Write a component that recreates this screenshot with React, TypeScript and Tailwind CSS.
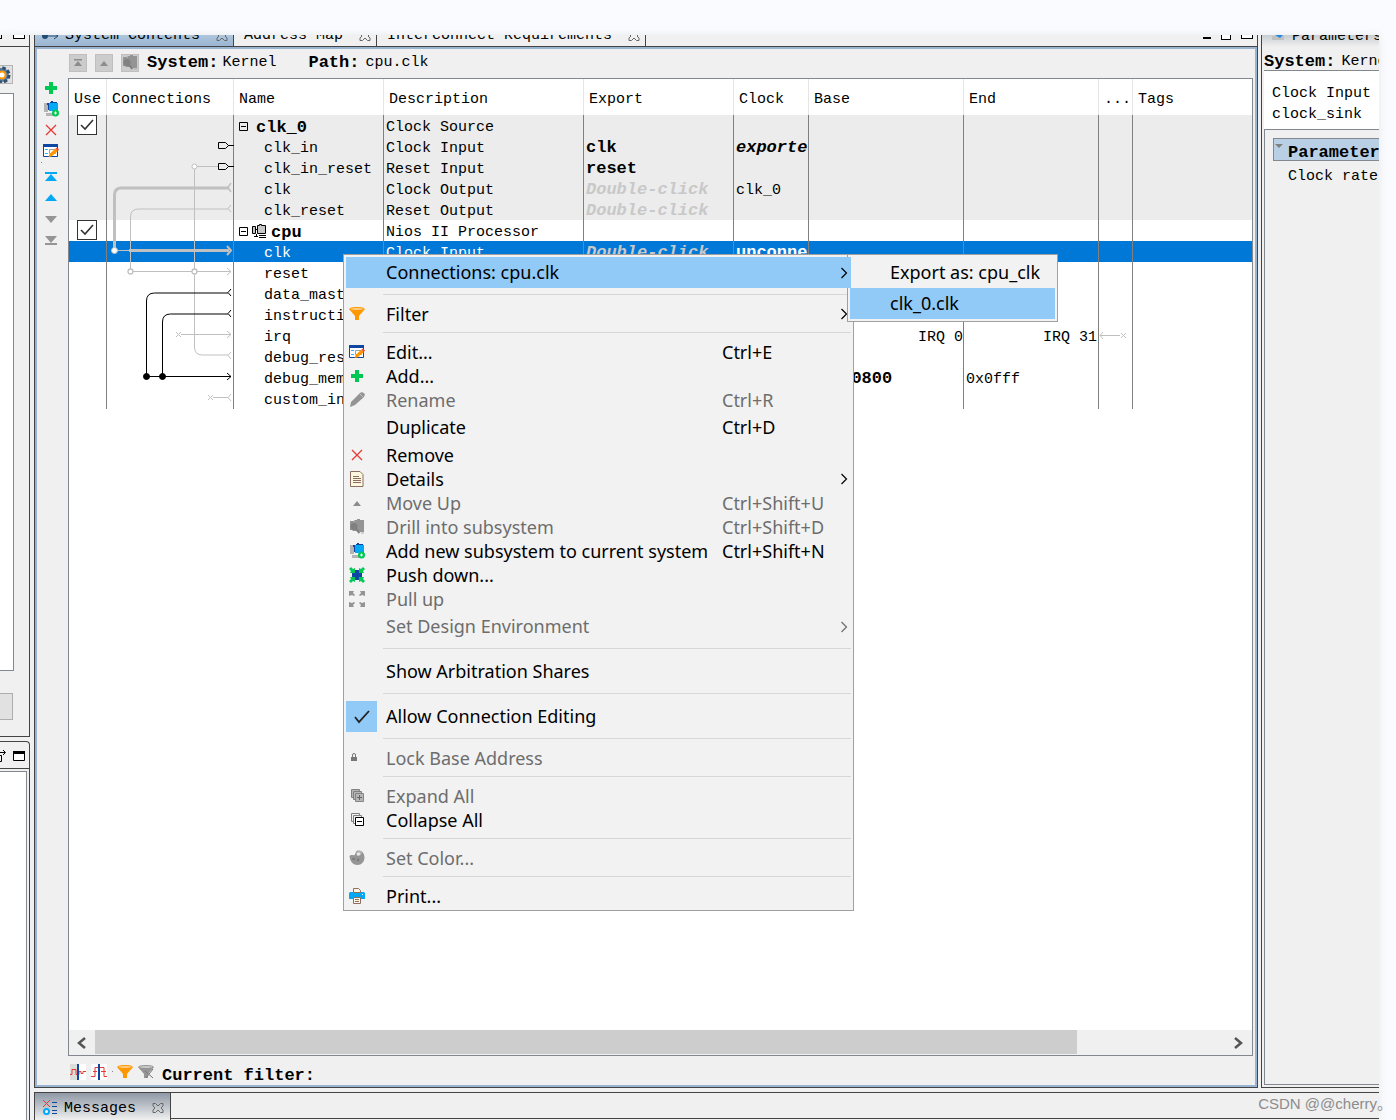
import type { ReactNode } from "react";
import clsx from "clsx";

/* ---------- icons ---------- */

function PlusIcon() {
  return (
    <svg width="16" height="16" viewBox="0 0 16 16">
      <path d="M6 2h4v4h4v4h-4v4H6v-4H2V6h4z" fill="#00c853" />
    </svg>
  );
}

function SubsystemIcon() {
  return (
    <svg width="16" height="16" viewBox="0 0 16 16">
      <path d="M1 2h4v9H1zM3 12h7v3H3z" fill="#b4b4b4" />
      <path d="M4 2h3V1h1V0h2v1h4v3H6v5H5V4H4z" fill="#0d47a1" />
      <path d="M6 2h9v8H6z" fill="#03a9f4" />
      <circle cx="12.500" cy="12" r="3.500" fill="#00c853" />
      <path d="M12.500 10.500v3M11 12h3" stroke="#fff" />
    </svg>
  );
}

function CrossIcon() {
  return (
    <svg width="16" height="16" viewBox="0 0 16 16">
      <path d="M3 3l10 10M13 3L3 13" stroke="#e53935" strokeWidth="1.3" />
    </svg>
  );
}

function EditIcon() {
  return (
    <svg width="16" height="16" viewBox="0 0 16 16">
      <path d="M.5 1.500h14v12H.5z" fill="#fff" stroke="#0d47a1" />
      <path d="M0 1h15v3H0z" fill="#0d47a1" />
      <path d="M2 6.500h3M2 10.500h3" stroke="#29b6f6" />
      <path d="M6.500 6.500h6v4h-6z" fill="#fff" stroke="#9e9e9e" />
      <path d="M5.500 14l1-3 6-5.500 2.500 2.500-6.500 5.500z" fill="#ff9800" />
      <path d="M12.500 5.500L14 4.500l2 2-1.300 1.500z" fill="#f44336" />
    </svg>
  );
}

function TriangleIcon({ down, bar, color }: { down?: boolean; bar?: boolean; color: string }) {
  return (
    <svg width="16" height="16" viewBox="0 0 16 16">
      <g transform={down ? "rotate(180 8 8)" : undefined} fill={color}>
        {bar && <path d="M2 3h12v2H2z" />}
        <path d={bar ? "M8 5l6 7H2z" : "M8 4l6 7H2z"} />
      </g>
    </svg>
  );
}

function SmallUpIcon({ bar }: { bar?: boolean }) {
  return (
    <svg width="16" height="16" viewBox="0 0 16 16">
      {bar && <path d="M4 4h8v1.500H4z" fill="#8c8c8c" />}
      <path d="M8 6l4 5H4z" fill="#8c8c8c" />
    </svg>
  );
}

function DrillIcon() {
  return (
    <svg width="16" height="16" viewBox="0 0 16 16">
      <path d="M1 2h4v1h1V1h2V0h3v1h4v12h-4l-1-1H4l-1-1H1z" fill="#949494" />
      <circle cx="5" cy="7.500" r="3.500" fill="#808080" />
      <path d="M7 10l3.500 4" stroke="#808080" strokeWidth="2" />
      <path d="M5.500 1v2M12 14h3" stroke="#b0b0b0" />
    </svg>
  );
}

function FunnelIcon({ off }: { off?: boolean }) {
  return (
    <svg width="16" height="16" viewBox="0 0 16 16">
      <path d="M0 3l6 7v4h4v-4l6-7z" fill={off ? "#959595" : "#ff9800"} />
      <ellipse cx="8" cy="3" rx="7.500" ry="1.500" fill={off ? "#c9c9c9" : "#ffcc80"} stroke={off ? "#959595" : "#ff9800"} />
      {off && <path d="M7 7l8 7M15 5l-7 9" stroke="#777" />}
    </svg>
  );
}

function PencilIcon() {
  return (
    <svg width="16" height="16" viewBox="0 0 16 16">
      <path d="M1 15l1-5 9-9 2-1 3 2-1 3-9 8z" fill="#949494" />
      <path d="M11 2l3 3" stroke="#c4c4c4" />
    </svg>
  );
}

function DocIcon() {
  return (
    <svg width="16" height="16" viewBox="0 0 16 16">
      <path d="M1.500.5h9.500l3 3v12H1.500z" fill="#fff8e1" stroke="#8d6e63" />
      <path d="M4 5.500h6M4 7.500h8M4 9.500h8M4 11.500h8" stroke="#8d6e63" />
    </svg>
  );
}

function PushIcon() {
  return (
    <svg width="16" height="16" viewBox="0 0 16 16">
      <path d="M3 3h10v10H3z" fill="#0d47a1" />
      <path
        d="M0 2l2-2 2 2 2-1v5H1l1-2zM16 2l-2-2-2 2-2-1v5h5l-1-2zM0 14l2 2 2-2 2 1v-5H1l1 2zM16 14l-2 2-2-2-2 1v-5h5l-1 2z"
        fill="#00c853"
      />
    </svg>
  );
}

function PullIcon() {
  return (
    <svg width="16" height="16" viewBox="0 0 16 16" fill="#949494">
      <path d="M0 0h5L4 2l2 2-1 1-2-1-3 1zM16 0h-5l1 2-2 2 1 1 2-1 3 1zM0 16h5l-1-2 2-2-1-1-2 1-3-1zM16 16h-5l1-2-2-2 1-1 2 1 3-1z" />
    </svg>
  );
}

function LockIcon() {
  return (
    <svg width="16" height="16" viewBox="0 0 16 16">
      <path d="M2 7h6v4H2z" fill="#777" />
      <path d="M3.500 7V5a1.500 1.500 0 0 1 3 0v2" fill="none" stroke="#777" />
    </svg>
  );
}

function StackIcon({ plus }: { plus?: boolean }) {
  const fill = plus ? "#b5b5b5" : "#f2f2f2";
  return (
    <svg width="16" height="16" viewBox="0 0 16 16">
      <path d="M2.500 1.500h8v8h-8z" fill={fill} stroke="#808080" />
      <path d="M4.500 3.500h8v8h-8z" fill={fill} stroke="#808080" />
      <path d="M6.500 5.500h8v8h-8z" fill={plus ? fill : "#fff"} stroke={plus ? "#858585" : "#000"} />
      <path d={plus ? "M8 9.500h5M10.500 7v5" : "M8 9.500h5"} stroke={plus ? "#666" : "#000"} />
    </svg>
  );
}

function PaletteIcon() {
  return (
    <svg width="16" height="16" viewBox="0 0 16 16">
      <path d="M0.500 6C2 4 4 6 5.500 5 7 4 6 1 9 .5c4-.5 6.500 3 6.500 7S12.500 15 8.500 15 1 12 .5 6z" fill="#959595" />
      <path d="M7 3c1-2 4-3 6-1l-1 3-4 1z" fill="#b8b8b8" />
      <circle cx="9.500" cy="4" r="1.500" fill="#eee" />
      <circle cx="4.500" cy="9" r="1.300" fill="#7b7b7b" />
      <circle cx="9" cy="10" r="1.300" fill="#7b7b7b" />
    </svg>
  );
}

function PrinterIcon() {
  return (
    <svg width="16" height="16" viewBox="0 0 16 16">
      <path d="M0 5l1-1h14l1 1v6H0z" fill="#03a9f4" />
      <path d="M4.500.5h5l2 2v2h-7z" fill="#fff8e1" stroke="#8d6e63" />
      <path d="M4.500 9.500h7v6h-7z" fill="#fff8e1" stroke="#8d6e63" />
      <path d="M6 11.500h4M6 13.500h4" stroke="#8d6e63" />
      <path d="M13 6h1v1h-1z" fill="#fff" />
    </svg>
  );
}

function Chevron() {
  return (
    <svg width="8" height="12" viewBox="0 0 8 12">
      <path d="M1.500 1l5 5-5 5" fill="none" stroke="currentColor" strokeWidth="1.200" />
    </svg>
  );
}

function TabClose() {
  return (
    <svg width="12" height="12" viewBox="0 0 12 12" fill="none" stroke="#666">
      <path d="M1 1.500h2.500L6 4l2.500-2.500H11V4L9 6l2 2v2.500H8.500L6 8l-2.500 2.500H1V8l2-2-2-2z" />
    </svg>
  );
}

function Gear() {
  return (
    <svg width="24" height="18" viewBox="-12 -9 24 18">
      <circle r="7" fill="#5c7fa8" stroke="#33506f" strokeWidth="3" strokeDasharray="3.500 2" />
      <circle r="4.500" fill="#ff9800" />
      <circle r="2.500" fill="#fff" />
    </svg>
  );
}

function WaveIcon({ step }: { step?: boolean }) {
  return (
    <svg width="16" height="16" viewBox="0 0 16 16" fill="none">
      <path d="M0 0h16v16H0z" fill="#fff" />
      {!step && <path d="M0 0h7v16H0z" fill="#dcdcd8" />}
      <path
        d={step ? "M0 12.500h4v-9h3M2 7.500h4M9 3.500h4v9h3M10 7.500h5" : "M0 10.500h2v-5h4v5h3v-3h2v2h2v-2h3"}
        stroke="#e53935"
      />
      <path d="M8 0v16" stroke="#0d47a1" strokeWidth="2" />
    </svg>
  );
}

function WindowIcon() {
  return (
    <svg width="12" height="10" viewBox="0 0 12 10">
      <path d="M.5 1.500h11v8H.5z" fill="#fff" stroke="#000" />
      <path d="M0 0h12v3H0z" />
    </svg>
  );
}

/* ---------- system table ---------- */

const GRAY = "#c0c0c0";

function ConnectionDiagram() {
  return (
    <svg className="pointer-events-none absolute left-0 top-0 z-[1]" width="127" height="294" viewBox="107 115 127 294" fill="none">
      <g stroke={GRAY}>
        <path d="M196 166.500h22" />
        <path d="M194.500 169v100M194.500 274v73q0 8 8 8H228M231 352l-3 3.500 3 3.500" />
        <path d="M130.500 269v-52q0-8 8-8H228M231 205l-3 3.500 3 3.500" />
        <path d="M133 271.500h98M227 268l4 3.500-4 3.500" />
        <path d="M181 334.500h50M227 331l4 3.500-4 3.500M176 332l5 5M181 332l-5 5" />
        <path d="M213 397.500h15M231 394l-3 3.500 3 3.500M208 395l5 5M213 395l-5 5" />
        <path d="M114.500 248v-53q0-7 7-7H229" strokeWidth="3" />
        <path d="M231 183l-3 4.500 3 4.500" strokeWidth="1.500" />
        <path d="M117 250.500h12" />
        <path d="M129 250.500h100" strokeWidth="3" />
        <path d="M227 246l4 4.500-4 4.500" strokeWidth="2" />
        <circle cx="194.500" cy="166.500" r="2.500" fill="#fff" />
        <circle cx="194.500" cy="271.500" r="2.500" fill="#fff" strokeWidth="1.300" />
        <circle cx="130.500" cy="271.500" r="2.500" fill="#fff" strokeWidth="1.300" />
        <circle cx="114.500" cy="250.500" r="3" fill="#fff" />
      </g>
      <g stroke="#000">
        <path d="M218.500 142.500h7l3 3-3 3h-7zM228 145.500h6M218.500 163.500h7l3 3-3 3h-7zM228 166.500h6" />
        <path d="M146.500 376v-75q0-8 8-8H228M231 289l-3 3.500 3 3.500" />
        <path d="M162.500 376v-54q0-8 8-8H228M231 310l-3 3.500 3 3.500" />
        <path d="M146 376.500h85M227 373l4 3.500-4 3.500" />
        <circle cx="146.500" cy="376.500" r="3" fill="#000" />
        <circle cx="162.500" cy="376.500" r="3" fill="#000" />
      </g>
    </svg>
  );
}

type Row = {
  name: string;
  module?: boolean;
  cpu?: boolean;
  description?: string;
  exported?: ReactNode;
  clock?: ReactNode;
  base?: ReactNode;
  end?: ReactNode;
  irq?: boolean;
  tone?: "gray" | "selected";
};

const hint = <span className="text-[17px] font-bold italic leading-3 text-[#c8c8c8]">Double-click</span>;

const rows: Row[] = [
  { name: "clk_0", module: true, description: "Clock Source", tone: "gray" },
  {
    name: "clk_in",
    description: "Clock Input",
    exported: <b className="text-[17px] leading-3">clk</b>,
    clock: <b className="text-[17px] italic leading-3">exported</b>,
    tone: "gray",
  },
  {
    name: "clk_in_reset",
    description: "Reset Input",
    exported: <b className="text-[17px] leading-3">reset</b>,
    tone: "gray",
  },
  { name: "clk", description: "Clock Output", exported: hint, clock: "clk_0", tone: "gray" },
  { name: "clk_reset", description: "Reset Output", exported: hint, tone: "gray" },
  { name: "cpu", module: true, cpu: true, description: "Nios II Processor" },
  {
    name: "clk",
    description: "Clock Input",
    exported: hint,
    clock: <b className="text-[17px] leading-3">unconnected</b>,
    tone: "selected",
  },
  { name: "reset" },
  { name: "data_mast" },
  { name: "instructi" },
  { name: "irq", base: <div className="text-right">IRQ 0</div>, end: <div className="pr-px text-right">IRQ 31</div>, irq: true },
  { name: "debug_res" },
  { name: "debug_mem", base: <b className="pl-5 text-[17px] leading-3">0x0800</b>, end: "0x0fff" },
  { name: "custom_in" },
];

const columns = ["Use", "Connections", "Name", "Description", "Export", "Clock", "Base", "End", "...", "Tags"];

function UseBox({ name }: { name: string }) {
  return (
    <label className="relative mb-px ml-2 block size-5">
      <input type="checkbox" defaultChecked aria-label={"Use " + name} className="peer block size-5 appearance-none border border-[#333] bg-white" />
      <svg className="absolute left-0 top-0 hidden peer-checked:block" width="20" height="20" viewBox="0 0 20 20">
        <path d="M4 10l4 4 8-9" fill="none" stroke="#333" strokeWidth="1.600" />
      </svg>
    </label>
  );
}

function NameCell({ row }: { row: Row }) {
  if (!row.module) return <span className="pl-[30px]">{row.name}</span>;
  return (
    <div className="flex h-4 items-center pl-[5px]">
      <svg className="mb-1" width="9" height="9" viewBox="0 0 9 9" fill="none" stroke="#000">
        <path d="M.5.5h8v8h-8zM2 4.500h5" />
      </svg>
      {row.cpu && (
        <svg className="mb-1 ml-1" width="15" height="14" viewBox="0 0 15 14" stroke="#000">
          <path d="M.5 2.500h3v7h-3zM5.500 1.500h2v-1h2v1h4v8h-8z" fill="#c8c8c8" />
          <path d="M3.500 5.500h2M2 12.500h4M7 11.500h7M7 13.500h7M4.500 10v2" fill="none" />
        </svg>
      )}
      <b className={clsx("text-[17px] leading-4", row.cpu ? "pl-1" : "pl-2")}>{row.name}</b>
    </div>
  );
}

function SystemTable() {
  const cell = "h-[21px] overflow-hidden border-r border-[#808080] p-0 pl-0.5 pt-[5px]";
  return (
    <table className="w-full table-fixed border-separate border-spacing-0 whitespace-nowrap text-left leading-4">
      <colgroup>
        <col className="w-[38px]" />
        <col className="w-[127px]" />
        <col className="w-[150px]" />
        <col className="w-[200px]" />
        <col className="w-[150px]" />
        <col className="w-[75px]" />
        <col className="w-[155px]" />
        <col className="w-[135px]" />
        <col className="w-[34px]" />
        <col />
      </colgroup>
      <thead>
        <tr>
          {columns.map((c) => (
            <th key={c} className="h-9 overflow-hidden border-r border-[#e5e5e5] p-0 pl-[5px] pt-[5px] font-normal last:border-r-0">
              {c}
            </th>
          ))}
        </tr>
      </thead>
      <tbody>
        {rows.map((row, i) => (
          <tr key={i} className={clsx(row.tone === "gray" && "bg-[#ececec]", row.tone === "selected" && "bg-[#0078d7] text-white")}>
            <td className="h-[21px] border-r border-[#808080] p-0">{row.module && <UseBox name={row.name} />}</td>
            <td className="relative h-[21px] border-r border-[#808080] p-0">{i === 0 && <ConnectionDiagram />}</td>
            <td className="h-[21px] overflow-hidden border-r border-[#808080] p-0 pt-[5px]">
              <NameCell row={row} />
            </td>
            <td className={cell}>{row.description}</td>
            <td className={cell}>{row.exported}</td>
            <td className={cell}>{row.clock}</td>
            <td className={cell}>{row.base}</td>
            <td className={cell}>{row.end}</td>
            <td className="h-[21px] border-r border-[#808080] p-0">
              {row.irq && (
                <svg className="block" width="28" height="8" viewBox="0 0 28 8" fill="none" stroke={GRAY}>
                  <path d="M4 0L1 3.500 4 7M1 3.500h20M22 1l5 5M27 1l-5 5" />
                </svg>
              )}
            </td>
            <td className="h-[21px] p-0" />
          </tr>
        ))}
      </tbody>
    </table>
  );
}

/* ---------- context menu ---------- */

type Item = {
  label: string;
  icon?: ReactNode;
  keys?: string;
  disabled?: boolean;
  arrow?: boolean;
  active?: boolean;
  checked?: boolean;
  tall?: boolean;
};

const groups: Item[][] = [
  [{ label: "Connections: cpu.clk", arrow: true, active: true, tall: true }],
  [{ label: "Filter", icon: <FunnelIcon />, arrow: true }],
  [
    { label: "Edit...", icon: <EditIcon />, keys: "Ctrl+E" },
    { label: "Add...", icon: <PlusIcon /> },
    { label: "Rename", icon: <PencilIcon />, keys: "Ctrl+R", disabled: true },
    { label: "Duplicate", keys: "Ctrl+D", tall: true },
    { label: "Remove", icon: <CrossIcon /> },
    { label: "Details", icon: <DocIcon />, arrow: true },
    { label: "Move Up", icon: <SmallUpIcon />, keys: "Ctrl+Shift+U", disabled: true },
    { label: "Drill into subsystem", icon: <DrillIcon />, keys: "Ctrl+Shift+D", disabled: true },
    { label: "Add new subsystem to current system", icon: <SubsystemIcon />, keys: "Ctrl+Shift+N" },
    { label: "Push down...", icon: <PushIcon /> },
    { label: "Pull up", icon: <PullIcon />, disabled: true },
    { label: "Set Design Environment", arrow: true, disabled: true, tall: true },
  ],
  [{ label: "Show Arbitration Shares", tall: true }],
  [{ label: "Allow Connection Editing", checked: true, tall: true }],
  [{ label: "Lock Base Address", icon: <LockIcon />, disabled: true }],
  [
    { label: "Expand All", icon: <StackIcon plus />, disabled: true },
    { label: "Collapse All", icon: <StackIcon /> },
  ],
  [{ label: "Set Color...", icon: <PaletteIcon />, disabled: true }],
  [{ label: "Print...", icon: <PrinterIcon /> }],
];

function MenuItem({ item }: { item: Item }) {
  return (
    <button
      role="menuitem"
      disabled={item.disabled}
      className={clsx(
        "flex w-full items-center text-left disabled:text-[#6d6d6d]",
        item.tall ? "h-[31px]" : "h-6",
        item.active && "relative z-20 bg-[#91c9f7]"
      )}
    >
      <span className={clsx("flex w-[31px] items-center self-stretch pl-[3px]", item.checked && "bg-[#91c9f7]")}>
        {item.icon}
        {item.checked && (
          <svg className="ml-1" width="18" height="14" viewBox="0 0 18 14">
            <path d="M2 7l4 5L16 1" fill="none" stroke="#222" strokeWidth="1.800" />
          </svg>
        )}
      </span>
      <span className={clsx("w-[345px] pl-[9px]", item.tall && "pb-0.5")}>{item.label}</span>
      <span className={clsx("flex-1", item.tall && "pb-0.5")}>{item.keys}</span>
      {item.arrow && (
        <span className="pr-[3px]">
          <Chevron />
        </span>
      )}
    </button>
  );
}

function ContextMenu() {
  return (
    <div className="whitespace-nowrap font-['Noto_Sans',sans-serif] text-[18px] leading-6 text-black">
      <div role="menu" className="absolute left-[343px] top-[254px] w-[511px] border border-[#a0a0a0] bg-[#f2f2f2] p-0.5">
        {groups.map((items, i) => (
          <div key={i}>
            {i > 0 && <hr className="mb-[7px] ml-[37px] mt-1.5 border-0 border-t border-[#d7d7d7]" />}
            {items.map((item) => (
              <MenuItem key={item.label} item={item} />
            ))}
          </div>
        ))}
      </div>
      <div role="menu" className="absolute left-[847px] top-[254px] z-10 w-[211px] border border-[#a0a0a0] bg-[#f2f2f2] p-0.5">
        <button role="menuitem" className="block h-[31px] w-full pb-0.5 pl-10 text-left">Export as: cpu_clk</button>
        <button role="menuitem" className="block h-[31px] w-full bg-[#91c9f7] pb-0.5 pl-10 text-left">clk_0.clk</button>
      </div>
    </div>
  );
}

/* ---------- panels ---------- */

function LeftColumn() {
  return (
    <aside className="flex w-[30px] shrink-0 flex-col">
      <section className="flex h-[702px] flex-col border-b border-r border-[#444]">
        <div className="flex h-3 shrink-0 justify-between overflow-hidden border-b border-[#444] pr-1">
          <span className="h-1 w-0.5 border-b border-r border-black" />
          <span className="h-1 w-3 border border-t-0 border-black bg-white" />
        </div>
        <button aria-label="Settings" className="mt-[18px] flex h-[19px] w-[13px] shrink-0 items-center justify-center overflow-hidden border border-l-0 border-[#b5b5b5] bg-[#e1e1e1]">
          <span className="-ml-2 shrink-0"><Gear /></span>
        </button>
        <div className="mt-[9px] w-3.5 flex-1 border border-l-0 border-[#828790] bg-white" />
        <button aria-label="Apply" className="mb-4 mt-[22px] h-[27px] w-[13px] shrink-0 border border-l-0 border-[#adadad] bg-[#e1e1e1]" />
      </section>
      <section className="mt-1 flex flex-1 flex-col rounded-tr border-r border-t border-[#444]">
        <div className="flex h-[27px] items-center justify-between border-b border-[#444] pr-1 pt-0.5">
          <svg width="6" height="12" viewBox="0 0 6 12" fill="none" stroke="#000">
            <path d="M0 5.500h1.500v6H0M0 2.500h5M3 0l2.500 2.500L3 5" />
          </svg>
          <WindowIcon />
        </div>
        <div className="mt-0.5 w-[27px] flex-1 border-r border-t border-[#828790] bg-white" />
      </section>
    </aside>
  );
}

function Tab({ label, active }: { label: string; active?: boolean }) {
  return (
    <button
      className={clsx(
        "flex h-6 shrink-0 items-center gap-4 border-r border-[#444] pr-[5px] pt-[3px]",
        active ? "-mb-px h-[25px] bg-linear-to-b from-[#c5d8e8] to-[#99b4d1] pl-1.5" : "pl-2.5"
      )}
    >
      <span className="flex items-center gap-1.5">
        {active && (
          <svg width="18" height="10" viewBox="0 0 18 10">
            <circle cx="4" cy="5" r="3" fill="#234a70" />
            <path d="M7 5h10M13 2l4 3-4 3" fill="none" stroke="#234a70" />
          </svg>
        )}
        {label}
      </span>
      <TabClose />
    </button>
  );
}

function ToolButton({ label, children }: { label: string; children: ReactNode }) {
  return (
    <button aria-label={label} className="flex h-[21px] w-7 items-center justify-center pb-px">
      {children}
    </button>
  );
}

function CenterPanel() {
  const top = "flex size-[18px] items-center justify-center border border-[#bfbfbf] bg-[#cccccc]";
  return (
    <section className="flex min-w-0 flex-1 flex-col border-x border-b border-[#444]">
      <div className="flex h-3 shrink-0 items-end overflow-hidden border-b border-[#444]">
        <Tab label="System Contents" active />
        <Tab label="Address Map" />
        <Tab label="Interconnect Requirements" />
        <div className="ml-auto flex h-full items-start gap-2.5 pr-1">
          <span className="mt-0.5 h-0.5 w-2 bg-black" />
          <span className="h-[5px] w-2.5 border border-t-0 border-black bg-white" />
          <span className="h-1 w-3 border border-t-0 border-black bg-white" />
        </div>
      </div>
      <div className="flex min-h-0 flex-1 flex-col border-2 border-[#99b4d1]">
        <div className="flex h-[29px] shrink-0 items-center gap-2 pb-0.5 pl-8">
          <button aria-label="Go to top" className={top}><SmallUpIcon bar /></button>
          <button aria-label="Go up" className={top}><SmallUpIcon /></button>
          <button aria-label="Drill into subsystem" className={top}><DrillIcon /></button>
          <b className="text-[17px]">System:</b>
          <span className="-ml-1">Kernel</span>
          <b className="ml-6 text-[17px]">Path:</b>
          <span className="-ml-0.5">cpu.clk</span>
        </div>
        <div className="flex min-h-0 flex-1 pr-0.5">
          <div className="w-[31px] shrink-0">
            <ToolButton label="Add"><PlusIcon /></ToolButton>
            <ToolButton label="Add subsystem"><SubsystemIcon /></ToolButton>
            <ToolButton label="Remove"><CrossIcon /></ToolButton>
            <ToolButton label="Edit"><EditIcon /></ToolButton>
            <div className="h-[5px] pl-1"><div className="size-px bg-[#888]" /></div>
            <ToolButton label="Move to top"><TriangleIcon bar color="#03a9f4" /></ToolButton>
            <ToolButton label="Move up"><TriangleIcon color="#03a9f4" /></ToolButton>
            <ToolButton label="Move down"><TriangleIcon down color="#959595" /></ToolButton>
            <ToolButton label="Move to bottom"><TriangleIcon down bar color="#959595" /></ToolButton>
          </div>
          <div className="flex min-w-0 flex-1 flex-col border border-[#828790] bg-white">
            <div className="min-h-0 flex-1 overflow-hidden">
              <SystemTable />
            </div>
            <div className="flex h-[25px] shrink-0 bg-[#f0f0f0] text-[#555]">
              <button aria-label="Scroll left" className="flex w-[26px] items-center justify-center">
                <svg width="10" height="12" viewBox="0 0 10 12"><path d="M8 1L2 6l6 5" fill="none" stroke="currentColor" strokeWidth="2.500" /></svg>
              </button>
              <div className="flex-1">
                <div className="h-6 w-[87%] bg-[#cdcdcd]" />
              </div>
              <button aria-label="Scroll right" className="flex w-7 items-center justify-center">
                <svg width="10" height="12" viewBox="0 0 10 12"><path d="M2 1l6 5-6 5" fill="none" stroke="currentColor" strokeWidth="2.500" /></svg>
              </button>
            </div>
          </div>
        </div>
        <div className="flex h-[29px] shrink-0 items-center pl-[33px] pt-0.5">
          <button aria-label="Clock domains"><WaveIcon /></button>
          <button aria-label="Reset domains" className="ml-[5px]"><WaveIcon step /></button>
          <span className="ml-[5px] size-px bg-[#888]" />
          <button aria-label="Filter" className="ml-1"><FunnelIcon /></button>
          <button aria-label="Clear filter" className="ml-[5px]"><FunnelIcon off /></button>
          <b className="pl-2 pt-2 text-[17px]">Current filter:</b>
        </div>
      </div>
    </section>
  );
}

function ParametersPanel() {
  return (
    <section className="flex w-[118px] shrink-0 flex-col overflow-hidden whitespace-nowrap border-b border-l border-[#444] pl-0.5">
      <div className="-ml-0.5 flex h-3 shrink-0 items-end gap-2 overflow-hidden bg-linear-to-b from-[#c8cdd2] to-[#f0f0f0] pl-2.5">
        <svg className="shrink-0" width="12" height="16" viewBox="0 0 12 16">
          <path d="M0 5h12v4H0z" fill="#c0c0c0" />
          <path d="M3 4h8L8 7z" fill="#1e88e5" />
        </svg>
        <span className="leading-5">Parameters</span>
      </div>
      <div className="flex h-6 shrink-0 items-center gap-1.5 border-b border-[#828790] pt-1.5">
        <b className="text-[17px]">System:</b>
        <span>Kernel</span>
      </div>
      <div className="h-[58px] shrink-0 bg-white pl-2 pt-3 leading-[21px]">
        <p>Clock Input</p>
        <p>clock_sink</p>
      </div>
      <div className="mb-0.5 flex-1 border border-r-0 border-[#828790] pl-2 pt-2">
        <h2 className="flex h-[23px] items-center border border-r-0 border-[#828790] bg-[#b8cfe5] text-[17px] font-bold">
          <svg className="mb-2 ml-px mr-[5px] shrink-0" width="8" height="4" viewBox="0 0 8 4"><path d="M0 0h8L4 4z" fill="#808080" /></svg>
          <span className="pt-1.5">Parameter</span>
        </h2>
        <p className="pl-[15px] pt-1.5">Clock rate</p>
      </div>
    </section>
  );
}

function MessagesPanel() {
  return (
    <section className="mt-1 flex h-7 shrink-0 border-l border-t border-[#444]">
      <button className="flex w-[136px] items-center border-r border-[#444] bg-linear-to-b from-[#8f99a6] to-[#f0f0f0] pl-2 pt-0.5">
        <svg width="15" height="15" viewBox="0 0 15 15" fill="none">
          <path d="M0 0l7 7M7 0L0 7" stroke="#e53935" />
          <circle cx="3.500" cy="11.500" r="2.500" fill="#fff" stroke="#03a9f4" strokeWidth="2" />
          <path d="M9 2.500h5M9 6.500h5M9 10.500h5M9 13.500h5" stroke="#0d47a1" />
        </svg>
        <span className="pl-1.5 pt-0.5">Messages</span>
        <span className="ml-4"><TabClose /></span>
      </button>
      <div className="mb-px flex-1 border-b border-[#444]" />
    </section>
  );
}

export default function App() {
  return (
    <div className="relative h-screen overflow-hidden bg-[#fafbff] pr-[17px] pt-[35px] font-['Liberation_Mono',monospace] text-[15px] leading-5 text-black">
      <main className="flex h-full bg-[#f0f0f0] shadow-[0_0_8px_rgba(0,0,0,0.08)]">
        <LeftColumn />
        <div className="ml-1 flex min-w-0 flex-1 flex-col">
          <div className="flex min-h-0 flex-1 gap-[3px]">
            <CenterPanel />
            <ParametersPanel />
          </div>
          <MessagesPanel />
        </div>
      </main>
      <ContextMenu />
      <p className="absolute bottom-1 right-1 font-['Liberation_Sans','Noto_Sans_CJK_SC',sans-serif] text-[15px] leading-6 text-[#8c8c8c]">
        CSDN @@cherry。
      </p>
    </div>
  );
}
